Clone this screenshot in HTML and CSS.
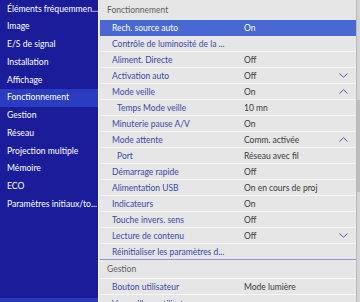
FILE: index.html
```html
<!DOCTYPE html>
<html lang="fr">
<head>
<meta charset="utf-8">
<link rel="stylesheet" href="styles.css">
</head>
<body>
<div class="screen">
  <nav class="sidebar">
    <div class="nav-item">Éléments fréquemmen...</div>
    <div class="nav-item">Image</div>
    <div class="nav-item">E/S de signal</div>
    <div class="nav-item">Installation</div>
    <div class="nav-item">Affichage</div>
    <div class="nav-item active">Fonctionnement</div>
    <div class="nav-item">Gestion</div>
    <div class="nav-item">Réseau</div>
    <div class="nav-item">Projection multiple</div>
    <div class="nav-item">Mémoire</div>
    <div class="nav-item">ECO</div>
    <div class="nav-item">Paramètres initiaux/to...</div>
    <div class="nav-fill"></div>
    <div class="nav-bottom"></div>
  </nav>
  <main class="panel">
    <div class="list">
      <div class="section-head">Fonctionnement</div>
      <div class="row selected"><span class="name">Rech. source auto</span><span class="value">On</span></div>
      <div class="row"><span class="name">Contrôle de luminosité de la ...</span><span class="value"></span></div>
      <div class="row"><span class="name">Aliment. Directe</span><span class="value">Off</span></div>
      <div class="row"><span class="name">Activation auto</span><span class="value">Off</span><svg class="chev" viewBox="0 0 9 5"><path d="M0.5 0.5 L4.5 4.3 L8.5 0.5"/></svg></div>
      <div class="row"><span class="name">Mode veille</span><span class="value">On</span><svg class="chev" viewBox="0 0 9 5"><path d="M0.5 4.5 L4.5 0.7 L8.5 4.5"/></svg></div>
      <div class="row sub"><span class="name">Temps Mode veille</span><span class="value">10 mn</span></div>
      <div class="row"><span class="name">Minuterie pause A/V</span><span class="value">On</span></div>
      <div class="row"><span class="name">Mode attente</span><span class="value">Comm. activée</span><svg class="chev" viewBox="0 0 9 5"><path d="M0.5 4.5 L4.5 0.7 L8.5 4.5"/></svg></div>
      <div class="row sub"><span class="name">Port</span><span class="value">Réseau avec fil</span></div>
      <div class="row"><span class="name">Démarrage rapide</span><span class="value">Off</span></div>
      <div class="row"><span class="name">Alimentation USB</span><span class="value">On en cours de proj</span></div>
      <div class="row"><span class="name">Indicateurs</span><span class="value">On</span></div>
      <div class="row"><span class="name">Touche invers. sens</span><span class="value">Off</span></div>
      <div class="row"><span class="name">Lecture de contenu</span><span class="value">Off</span><svg class="chev" viewBox="0 0 9 5"><path d="M0.5 0.5 L4.5 4.3 L8.5 0.5"/></svg></div>
      <div class="row last"><span class="name">Réinitialiser les paramètres d...</span><span class="value"></span></div>
      <div class="section-head second">Gestion</div>
      <div class="row"><span class="name">Bouton utilisateur</span><span class="value">Mode lumière</span></div>
      <div class="row partial"><span class="name">Verrouillage utilisateur</span><span class="value"></span></div>
    </div>
    <div class="scrollbar"><div class="thumb"></div></div>
  </main>
</div>
</body>
</html>
```

FILE: styles.css
```css
* { box-sizing: border-box; }
html, body { margin: 0; padding: 0; }
body {
  width: 360px;
  height: 302px;
  overflow: hidden;
  font-family: "Lato", "Open Sans", sans-serif;
  background: #e6e6e6;
}
.screen {
  display: flex;
  width: 360px;
  height: 302px;
}
.sidebar {
  width: 98px;
  flex: none;
  background: #1a1c9a;
  display: flex;
  flex-direction: column;
  padding-top: 0.5px;
}
.nav-item {
  height: 17.75px;
  line-height: 17.75px;
  padding-left: 7px;
  color: #ffffff;
  font-size: 8.6px;
  white-space: nowrap;
  overflow: hidden;
}
.nav-item.active {
  background: #2a3cc0;
}
.nav-fill { flex: 1; }
.nav-bottom {
  height: 4px;
  background: #2b3ab8;
}
.panel {
  flex: 1;
  display: flex;
  border-left: 1px solid #f4f4f4;
  background: #e6e6e6;
  min-width: 0;
}
.list {
  flex: 1;
  min-width: 0;
  padding-left: 1px;
}
.section-head {
  height: 20px;
  line-height: 20px;
  padding-left: 7px;
  font-size: 8.5px;
  color: #5e5e5e;
}
.section-head.second {
  height: 19px;
  line-height: 19px;
  border-bottom: 1px solid #f6f6f6;
}
.row {
  display: flex;
  align-items: center;
  height: 16px;
  border-bottom: 1px solid #f6f6f6;
  font-size: 8.5px;
  white-space: nowrap;
}
.row.partial { align-items: flex-start; padding-top: 4px; }
.row.last {
  border-bottom: 1px solid #8c96d8;
}
.name {
  width: 144px;
  padding-left: 12px;
  color: #3a47a8;
  overflow: hidden;
}
.row.sub .name { padding-left: 17px; }
.value {
  flex: 1;
  color: #3a3a3a;
}
.row.selected {
  background: #4a68d2;
  border-bottom-color: #4a68d2;
}
.row.selected .name,
.row.selected .value { color: #ffffff; }
.chev {
  width: 9px;
  height: 5px;
  margin-right: 8px;
  fill: none;
  stroke: #4a58b8;
  stroke-width: 1;
}
.scrollbar {
  width: 4px;
  flex: none;
  background: #d4d4d4;
  border-left: 1px solid #b8b8b8;
  position: relative;
}
.thumb {
  position: absolute;
  left: 0;
  right: 0;
  top: 100px;
  height: 92px;
  background: #bdbdbd;
}
```
